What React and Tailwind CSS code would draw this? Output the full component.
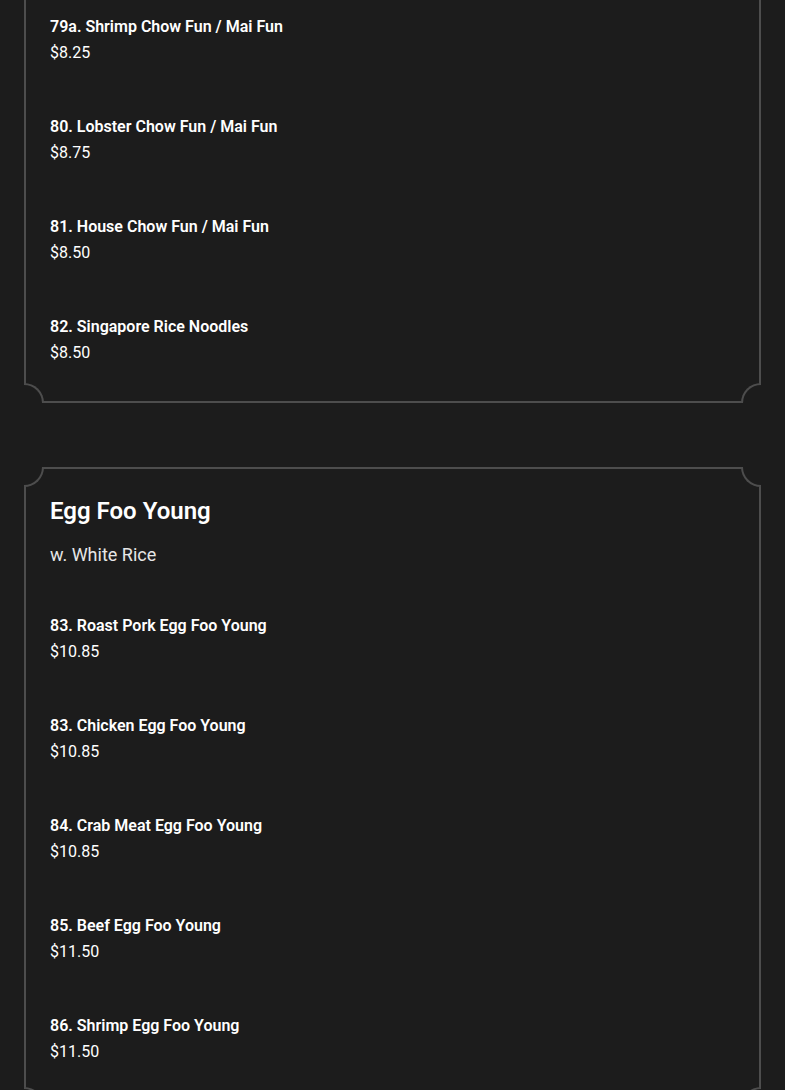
const card1 = [
  { name: '79a. Shrimp Chow Fun / Mai Fun', price: '$8.25' },
  { name: '80. Lobster Chow Fun / Mai Fun', price: '$8.75' },
  { name: '81. House Chow Fun / Mai Fun', price: '$8.50' },
  { name: '82. Singapore Rice Noodles', price: '$8.50' },
];

const card2 = [
  { name: '83. Roast Pork Egg Foo Young', price: '$10.85' },
  { name: '83. Chicken Egg Foo Young', price: '$10.85' },
  { name: '84. Crab Meat Egg Foo Young', price: '$10.85' },
  { name: '85. Beef Egg Foo Young', price: '$11.50' },
  { name: '86. Shrimp Egg Foo Young', price: '$11.50' },
];

// concave notch on each corner of a menu card
const Corners = () => (
  <>
    <span className="absolute -left-[2px] -top-[2px] w-5 h-5 bg-[#1c1c1c] border-b-2 border-r-2 border-[#4d4d4d] rounded-br-[20px]" />
    <span className="absolute -right-[2px] -top-[2px] w-5 h-5 bg-[#1c1c1c] border-b-2 border-l-2 border-[#4d4d4d] rounded-bl-[20px]" />
    <span className="absolute -left-[2px] -bottom-[2px] w-5 h-5 bg-[#1c1c1c] border-t-2 border-r-2 border-[#4d4d4d] rounded-tr-[20px]" />
    <span className="absolute -right-[2px] -bottom-[2px] w-5 h-5 bg-[#1c1c1c] border-t-2 border-l-2 border-[#4d4d4d] rounded-tl-[20px]" />
  </>
);

const Item = ({ name, price }) => (
  <div className="flex flex-col">
    <div className="text-base leading-[26px] font-semibold text-white">{name}</div>
    <div className="text-base leading-[26px] text-white">{price}</div>
  </div>
);

export default function App() {
  return (
    <div className="min-h-screen bg-[#1c1c1c] overflow-hidden" style={{ fontFamily: 'Roboto, "Liberation Sans", sans-serif' }}>
      {/* Chow Fun card, top scrolled out of view */}
      <section className="relative mx-6 -mt-10 border-2 border-[#4d4d4d] px-6 pt-[52px] pb-[35px]">
        <Corners />
        <div className="flex flex-col gap-12">
          {card1.map(i => <Item key={i.name} {...i} />)}
        </div>
      </section>

      {/* Egg Foo Young */}
      <section className="relative mx-6 mt-16 border-2 border-[#4d4d4d] px-6 pt-[26px] pb-10">
        <Corners />
        <h2 className="text-2xl leading-8 font-semibold text-white">Egg Foo Young</h2>
        <p className="mt-[14px] text-lg leading-7 text-[#e6e6e6]">w. White Rice</p>
        <div className="mt-11 flex flex-col gap-12">
          {card2.map(i => <Item key={i.name + i.price} {...i} />)}
        </div>
      </section>
    </div>
  );
}
